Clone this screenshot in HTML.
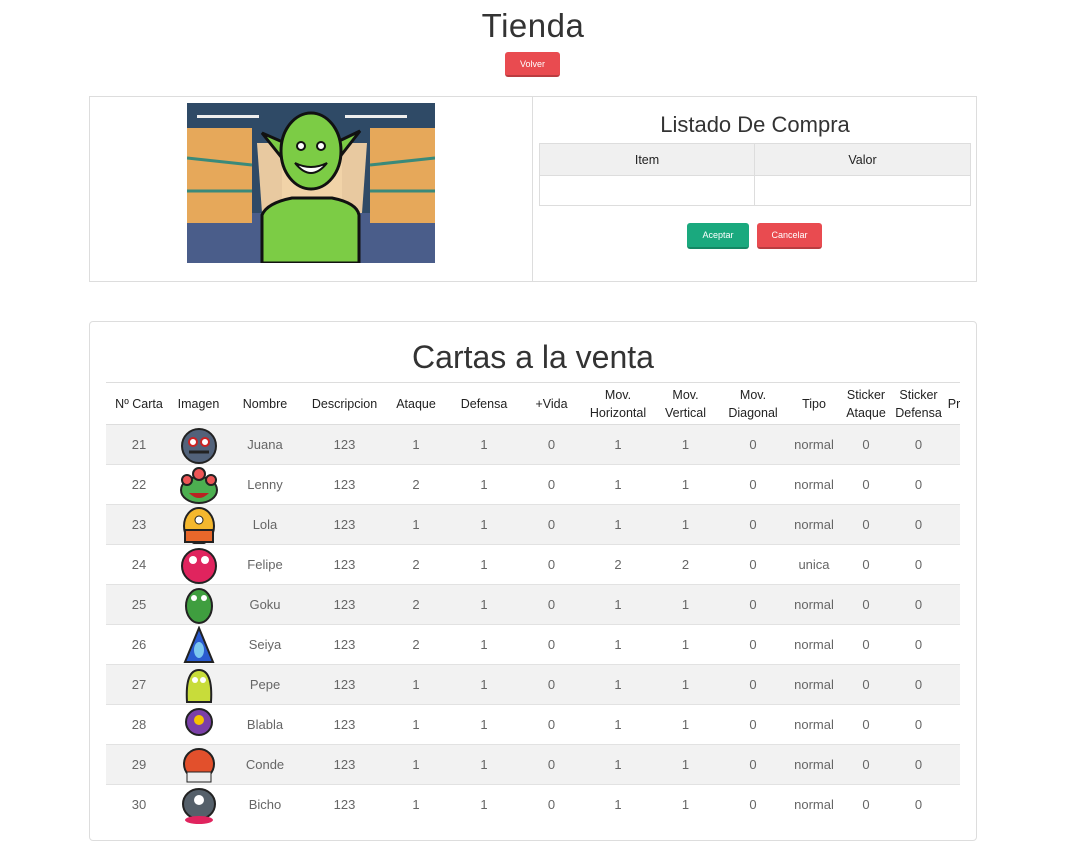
<!DOCTYPE html>
<html><head><meta charset="utf-8"><style>
*{box-sizing:border-box;margin:0;padding:0}
body{width:1088px;height:824px;overflow:hidden;background:#fff;font-family:"Liberation Sans",sans-serif;color:#222;position:relative}
.abs{position:absolute}
h1{position:absolute;left:0;width:1066px;text-align:center;font-weight:normal;top:7px;font-size:33px;color:#333;letter-spacing:0.5px}
.btn{position:absolute;color:#fff;font-size:9px;text-align:center;border-radius:3px;border-bottom:2px solid rgba(0,0,0,.2)}
.box1{left:89px;top:96px;width:888px;height:186px;border:1px solid #ddd}
.box2{left:89px;top:321px;width:888px;height:520px;border:1px solid #ddd;border-radius:4px}
table{border-collapse:collapse}
.cards{position:absolute;left:106px;top:382px;width:854px;overflow:hidden;height:450px}
.cards table{table-layout:fixed;width:880px;font-size:13px}
.cards th{font-weight:normal;color:#222;height:42px;border-top:1px solid #ddd;border-bottom:1px solid #ddd;line-height:18px;font-size:12.5px;padding:0}
.cards td{height:40px;text-align:center;color:#666;border-top:1px solid #e2e2e2;padding:0;line-height:14px}
.cards td svg{display:block;margin:0 auto}
.cards tr.g td{background:#f2f2f2}
.o{color:#a77a3c}.p{color:#6a4c93}.n{color:#5a4a6a}
</style></head><body>
<h1>Tienda</h1>
<div class="btn" style="left:505px;top:52px;width:55px;height:25px;line-height:24px;background:#e94b50">Volver</div>

<div class="abs box1">
 <div class="abs" style="left:442px;top:0;width:1px;height:184px;background:#ddd"></div>
 <svg class="abs" style="left:97px;top:6px" width="248" height="160" viewBox="0 0 248 160">
  <rect width="248" height="160" fill="#2f4a66"/>
  <rect y="110" width="248" height="50" fill="#4a5d8a"/>
  <polygon points="70,40 180,40 175,110 75,110" fill="#e8c9a0"/>
  <rect x="95" y="55" width="60" height="55" fill="#f1d3a8"/>
  <rect x="0" y="25" width="65" height="95" fill="#e6a85a"/>
  <rect x="183" y="25" width="65" height="95" fill="#e6a85a"/>
  <g stroke="#3a8a7a" stroke-width="3"><line x1="0" y1="55" x2="65" y2="62"/><line x1="0" y1="88" x2="65" y2="88"/><line x1="183" y1="62" x2="248" y2="55"/><line x1="183" y1="88" x2="248" y2="88"/></g>
  <rect x="10" y="12" width="62" height="3" fill="#eee"/><rect x="158" y="12" width="62" height="3" fill="#eee"/>
  <path d="M75 160 L75 112 Q80 100 105 95 L145 95 Q170 100 172 112 L172 160Z" fill="#7ccc45" stroke="#111" stroke-width="3"/>
  <path d="M75 30 L95 55 L98 40Z M173 28 L152 55 L148 40Z" fill="#7ccc45" stroke="#111" stroke-width="3"/>
  <ellipse cx="124" cy="48" rx="30" ry="38" fill="#7ccc45" stroke="#111" stroke-width="3"/>
  <circle cx="114" cy="43" r="4" fill="#fff" stroke="#111" stroke-width="2"/><circle cx="134" cy="43" r="4" fill="#fff" stroke="#111" stroke-width="2"/>
  <path d="M108 60 Q124 80 140 60 Q124 68 108 60Z" fill="#fff" stroke="#111" stroke-width="2"/>
 </svg>
 <div class="abs" style="left:443px;width:444px;top:15px;text-align:center;font-size:22px;color:#333">Listado De Compra</div>
 <table class="abs" style="left:449px;top:46px;width:432px;font-size:12.5px">
  <tr style="background:#f0f0f0;height:32px"><th style="border:1px solid #ddd;font-weight:normal;width:215px">Item</th><th style="border:1px solid #ddd;font-weight:normal">Valor</th></tr>
  <tr style="height:30px"><td style="border:1px solid #ddd"></td><td style="border:1px solid #ddd"></td></tr>
 </table>
 <div class="btn" style="left:597px;top:126px;width:62px;height:26px;line-height:25px;background:#1aa97e">Aceptar</div>
 <div class="btn" style="left:667px;top:126px;width:65px;height:26px;line-height:25px;background:#e94b50">Cancelar</div>
</div>

<div class="abs box2">
 <div class="abs" style="left:0;width:886px;top:17px;text-align:center;font-size:32px;color:#333">Cartas a la venta</div>
</div>

<div class="cards"><table>
<colgroup><col style="width:66px"><col style="width:53px"><col style="width:80px"><col style="width:79px"><col style="width:64px"><col style="width:72px"><col style="width:63px"><col style="width:70px"><col style="width:65px"><col style="width:70px"><col style="width:52px"><col style="width:52px"><col style="width:53px"><col style="width:41px"></colgroup>
<tr><th>Nº Carta</th><th>Imagen</th><th>Nombre</th><th>Descripcion</th><th>Ataque</th><th>Defensa</th><th>+Vida</th><th>Mov.<br>Horizontal</th><th>Mov.<br>Vertical</th><th>Mov.<br>Diagonal</th><th>Tipo</th><th>Sticker<br>Ataque</th><th>Sticker<br>Defensa</th><th>Precio</th></tr>
<tr class="g"><td>21</td><td><svg width="44" height="38"><ellipse cx="22" cy="20" rx="17" ry="17" fill="#52627a" stroke="#222" stroke-width="2"/><circle cx="16" cy="16" r="4" fill="#fff" stroke="#c22" stroke-width="2"/><circle cx="28" cy="16" r="4" fill="#fff" stroke="#c22" stroke-width="2"/><path d="M12 26h20" stroke="#222" stroke-width="3"/></svg></td><td class="n">Juana</td><td>123</td><td class="o">1</td><td class="p">1</td><td>0</td><td class="p">1</td><td>1</td><td>0</td><td>normal</td><td>0</td><td>0</td><td></td></tr>
<tr><td>22</td><td><svg width="44" height="38"><ellipse cx="22" cy="24" rx="18" ry="13" fill="#4caf50" stroke="#222" stroke-width="2"/><circle cx="22" cy="8" r="6" fill="#e55" stroke="#222" stroke-width="2"/><circle cx="10" cy="14" r="5" fill="#e55" stroke="#222" stroke-width="2"/><circle cx="34" cy="14" r="5" fill="#e55" stroke="#222" stroke-width="2"/><path d="M12 27q10 10 20 0z" fill="#b22"/></svg></td><td class="n">Lenny</td><td>123</td><td>2</td><td class="p">1</td><td>0</td><td class="p">1</td><td>1</td><td>0</td><td>normal</td><td>0</td><td>0</td><td></td></tr>
<tr class="g"><td>23</td><td><svg width="44" height="38"><ellipse cx="22" cy="20" rx="15" ry="18" fill="#f5b82e" stroke="#222" stroke-width="2"/><rect x="8" y="24" width="28" height="12" fill="#e8672a" stroke="#222" stroke-width="2"/><circle cx="22" cy="14" r="4" fill="#fff" stroke="#222"/></svg></td><td class="n">Lola</td><td>123</td><td class="o">1</td><td class="p">1</td><td>0</td><td class="p">1</td><td>1</td><td>0</td><td>normal</td><td>0</td><td>0</td><td></td></tr>
<tr><td>24</td><td><svg width="44" height="38"><ellipse cx="22" cy="20" rx="17" ry="17" fill="#e0245e" stroke="#222" stroke-width="2"/><circle cx="16" cy="14" r="4" fill="#fff"/><circle cx="28" cy="14" r="4" fill="#fff"/></svg></td><td class="n">Felipe</td><td>123</td><td>2</td><td class="p">1</td><td>0</td><td>2</td><td>2</td><td>0</td><td>unica</td><td>0</td><td>0</td><td></td></tr>
<tr class="g"><td>25</td><td><svg width="44" height="38"><ellipse cx="22" cy="20" rx="13" ry="17" fill="#3f9e3f" stroke="#222" stroke-width="2"/><circle cx="17" cy="12" r="3" fill="#fff"/><circle cx="27" cy="12" r="3" fill="#fff"/></svg></td><td class="n">Goku</td><td>123</td><td>2</td><td class="p">1</td><td>0</td><td class="p">1</td><td>1</td><td>0</td><td>normal</td><td>0</td><td>0</td><td></td></tr>
<tr><td>26</td><td><svg width="44" height="38"><path d="M22 2 L36 36 L8 36Z" fill="#2a5bd0" stroke="#222" stroke-width="2"/><ellipse cx="22" cy="24" rx="5" ry="8" fill="#7cc7f0"/></svg></td><td class="n">Seiya</td><td>123</td><td>2</td><td class="p">1</td><td>0</td><td class="p">1</td><td>1</td><td>0</td><td>normal</td><td>0</td><td>0</td><td></td></tr>
<tr class="g"><td>27</td><td><svg width="44" height="38"><path d="M10 36 Q8 4 22 4 Q36 4 34 36Z" fill="#c8dc3a" stroke="#222" stroke-width="2"/><circle cx="18" cy="14" r="3" fill="#fff"/><circle cx="26" cy="14" r="3" fill="#fff"/></svg></td><td class="n">Pepe</td><td>123</td><td class="o">1</td><td class="p">1</td><td>0</td><td class="p">1</td><td>1</td><td>0</td><td>normal</td><td>0</td><td>0</td><td></td></tr>
<tr><td>28</td><td><svg width="44" height="38"><circle cx="22" cy="16" r="13" fill="#7b3fa8" stroke="#222" stroke-width="2"/><circle cx="22" cy="14" r="5" fill="#f5c400"/></svg></td><td class="n">Blabla</td><td>123</td><td class="o">1</td><td class="p">1</td><td>0</td><td class="p">1</td><td>1</td><td>0</td><td>normal</td><td>0</td><td>0</td><td></td></tr>
<tr class="g"><td>29</td><td><svg width="44" height="38"><ellipse cx="22" cy="18" rx="15" ry="15" fill="#e2502c" stroke="#222" stroke-width="2"/><rect x="10" y="26" width="24" height="10" fill="#eee" stroke="#222"/></svg></td><td class="n">Conde</td><td>123</td><td class="o">1</td><td class="p">1</td><td>0</td><td class="p">1</td><td>1</td><td>0</td><td>normal</td><td>0</td><td>0</td><td></td></tr>
<tr><td>30</td><td><svg width="44" height="38"><ellipse cx="22" cy="18" rx="16" ry="15" fill="#55606a" stroke="#222" stroke-width="2"/><circle cx="22" cy="14" r="5" fill="#fff"/><ellipse cx="22" cy="34" rx="14" ry="4" fill="#e0245e"/></svg></td><td class="n">Bicho</td><td>123</td><td class="o">1</td><td class="p">1</td><td>0</td><td class="p">1</td><td>1</td><td>0</td><td>normal</td><td>0</td><td>0</td><td></td></tr>
</table></div>
</body></html>
